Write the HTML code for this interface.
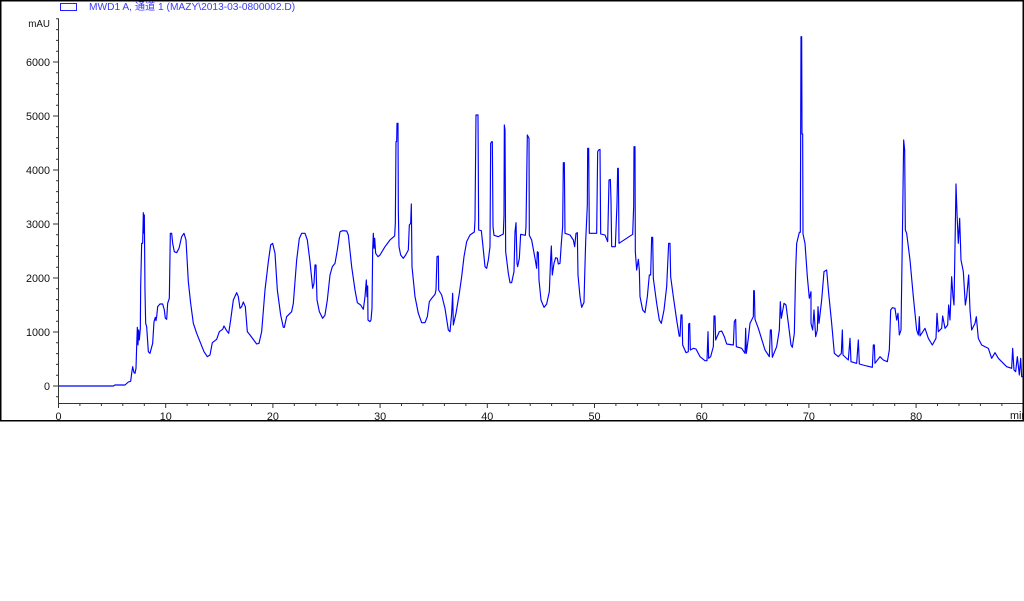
<!DOCTYPE html>
<html>
<head>
<meta charset="utf-8">
<style>
html,body{margin:0;padding:0;background:#fff;width:1024px;height:601px;overflow:hidden}
svg{display:block;position:absolute;left:0;top:0}
text{font-family:"Liberation Sans","Noto Sans CJK SC",sans-serif;font-size:10.8px;fill:#111}
.tr{fill:none;stroke:#0000ff;stroke-width:1.15;vector-effect:non-scaling-stroke;stroke-linejoin:round}
.soft{filter:blur(0.35px)}
</style>
</head>
<body>
<svg width="1024" height="601" viewBox="0 0 1024 601">
<rect width="1024" height="601" fill="#fff"/>
<g class="soft">
<rect x="60.5" y="3.5" width="16" height="7" fill="none" stroke="#2020ff" stroke-width="1"/>
<text x="89" y="10" style="font-size:10.2px;fill:#3a3aff">MWD1 A, 通道 1 (MAZY\2013-03-0800002.D)</text>
<path d="M58.5 19V403.5H1023" fill="none" stroke="#333" stroke-width="1"/>
<path d="M53 386H59M53 332H59M53 278H59M53 224H59M53 170H59M53 116H59M53 62H59M58.5 404V408M165.7 404V408M272.9 404V408M380.1 404V408M487.3 404V408M594.5 404V408M701.7 404V408M808.9 404V408M916.1 404V408" fill="none" stroke="#333" stroke-width="1"/>
<path d="M56 396.8H59M56 375.2H59M56 364.4H59M56 353.6H59M56 342.8H59M56 321.2H59M56 310.4H59M56 299.6H59M56 288.8H59M56 267.2H59M56 256.4H59M56 245.6H59M56 234.8H59M56 213.2H59M56 202.4H59M56 191.6H59M56 180.8H59M56 159.2H59M56 148.4H59M56 137.6H59M56 126.8H59M56 105.2H59M56 94.4H59M56 83.6H59M56 72.8H59M56 51.2H59M56 40.4H59M56 29.6H59M56 18.8H59" fill="none" stroke="#333" stroke-width="1"/>
<path d="M79.9 404V406M101.4 404V406M122.8 404V406M144.3 404V406M187.1 404V406M208.6 404V406M230 404V406M251.5 404V406M294.3 404V406M315.8 404V406M337.2 404V406M358.7 404V406M401.5 404V406M423 404V406M444.4 404V406M465.9 404V406M508.7 404V406M530.2 404V406M551.6 404V406M573.1 404V406M615.9 404V406M637.4 404V406M658.8 404V406M680.3 404V406M723.1 404V406M744.6 404V406M766 404V406M787.5 404V406M830.3 404V406M851.8 404V406M873.2 404V406M894.7 404V406M937.5 404V406M959 404V406M980.4 404V406M1001.9 404V406" fill="none" stroke="#333" stroke-width="1"/>

<g text-anchor="end">
<text x="50" y="27" style="font-size:9.8px">mAU</text>
<text x="50" y="66">6000</text>
<text x="50" y="120">5000</text>
<text x="50" y="174">4000</text>
<text x="50" y="228">3000</text>
<text x="50" y="282">2000</text>
<text x="50" y="336">1000</text>
<text x="50" y="390">0</text>
</g>
<g text-anchor="middle">
<text x="58.5" y="420">0</text>
<text x="165.7" y="420">10</text>
<text x="272.9" y="420">20</text>
<text x="380.1" y="420">30</text>
<text x="487.3" y="420">40</text>
<text x="594.5" y="420">50</text>
<text x="701.7" y="420">60</text>
<text x="808.9" y="420">70</text>
<text x="916.1" y="420">80</text>
</g>
<text x="1010" y="419">min</text>

<g transform="translate(0,200) scale(0.33333)">
<polyline class="tr" points="177,558 340,558 345,555 375,555 385,546 392,544 395,520 398,500 402,518 405,520 408,505 410,440 412,382 414,435 416,390 418,420 421,385 422,260 425,130 428,130 430,38 432,100 433,45 435,275 437,370 440,380 445,455 450,460 458,430 462,365 466,352 468,362 470,350 473,320 480,312 488,312 493,330 496,355 500,358 503,310 508,295 511,100 515,100 518,130 523,155 530,158 537,145 545,110 552,100 558,120 565,245 572,310 580,370 590,400 600,425 612,455 622,470 630,465 637,428 650,418 658,395 668,388 672,378 680,392 686,400 692,360 700,300 710,278 715,290 720,325 725,320 730,306 736,320 742,395 750,405 770,432 777,430 785,395 795,270 805,185 812,135 818,130 825,160 832,270 842,345 850,382 853,382 860,350 870,340 875,335 880,310 890,180 898,115 905,100 915,100 922,120 930,185 938,265 942,250 945,195 948,195 951,300 958,335 968,355 975,345 982,300 990,225 997,200 1005,190 1012,150 1020,95"/>
</g>
<g transform="translate(340,100) scale(0.33333)">
<polyline class="tr" points="0,395 8,392 20,393 25,405 35,500 45,570 52,608 62,615 70,628 75,590 77,565 79,540 81,590 83,558 84,660 90,665 93,660 96,625 98,450 100,400 102,445 104,415 107,460 114,470 120,465 135,440 150,420 164,408 166,370 168,125 170,125 171,70 174,70 175,330 177,440 182,465 190,475 197,465 205,450 208,375 212,370 214,312 216,500 225,590 235,640 245,668 255,668 262,650 268,605 275,595 285,583 288,570 291,470 295,468 296,570 305,585 315,625 325,690 330,695 335,640 338,580 340,675 348,640 358,580 365,530 372,470 380,425 390,405 403,396 405,360 408,45 414,45 416,390 424,392 428,430 435,500 440,505 445,480 450,440 452,130 455,125 457,125 459,380 462,406 475,410 490,402 492,345 493,75 495,90 497,455 505,520 510,548 515,548 522,515 525,395 528,368 531,490 533,500 538,475 542,403 556,406 558,380 562,105 567,115 568,406 575,420 585,475 590,505 592,455 595,458 597,540 603,600 612,622 620,612 628,575 632,475 634,438 637,525 642,490 647,473 652,475 655,492 660,490 664,430 668,380 670,188 673,188 675,400 690,405 700,420 704,440 708,400 712,398 714,525 720,590 725,622 732,607 734,530 737,425 742,315 743,145 746,145 748,400 770,400 773,155 776,150 780,148 782,402 795,405 803,425 807,240 811,238 813,300 815,440 826,440 831,310 833,205 835,205 837,430 878,403 881,320 882,140 885,140 886,455 890,510 895,478 898,510 900,590 908,630 915,638 922,590 928,525 932,525 935,412 938,412 940,535 950,610 958,660 964,670 972,630 980,560 986,430 990,430 992,530 1000,590 1010,660 1018,710"/>
</g>
<g transform="translate(680,30) scale(0.33333)">
<polyline class="tr" points="0,920 3,855 6,855 8,945 18,968 25,965 26,882 29,880 31,960 40,955 48,957 60,980 75,992 81,992 84,905 86,985 92,980 100,950 102,858 105,858 107,930 118,905 125,903 133,920 140,942 160,945 163,875 167,868 169,950 185,955 195,970 197,895 199,970 205,925 210,880 220,860 221,782 223,782 225,868 235,895 255,960 268,980 271,900 274,900 277,982 290,950 298,900 301,815 304,865 312,820 318,825 325,880 333,945 337,952 343,910 347,720 350,640 358,607 361,607 363,20 365,20 366,312 368,312 369,612 375,640 382,740 388,805 393,785 393,880 398,900 402,840 407,920 412,900 414,830 417,880 425,810 432,725 440,720 446,790 455,880 463,970 475,980 484,970 487,900 489,975 505,990 510,925 513,995 530,1000 535,930 538,1002 560,1008 577,1012 580,945 583,945 585,1000 600,980 610,990 622,995 628,960 632,840 637,833 645,835 650,870 654,850 658,915 663,900 668,560 671,330 674,360 676,600 680,610 690,690 700,800 710,900 715,915 718,860 720,918 735,895 745,925 757,945 768,925 771,850 775,905 785,895 788,858 795,895 803,885 806,825 810,870 815,740 819,800 822,825 826,590 828,462 831,550 835,640 839,565 843,690 850,725 856,825 860,800 866,735 870,840 875,900 885,880 889,860 895,925 905,945 925,955 935,985 945,968 955,985 980,1010 995,1015 998,955 1002,1020 1007,1025 1012,980 1018,1035 1022,985 1025,1040 1030,1040"/>
</g>
</g>

<rect x="0" y="0" width="1024" height="1.5" fill="#000"/>
<rect x="0" y="0" width="1.5" height="421.5" fill="#000"/>
<rect x="1022.5" y="0" width="1.5" height="421.5" fill="#000"/>
<rect x="0" y="420" width="1024" height="1.5" fill="#000"/>
</svg>
</body>
</html>
